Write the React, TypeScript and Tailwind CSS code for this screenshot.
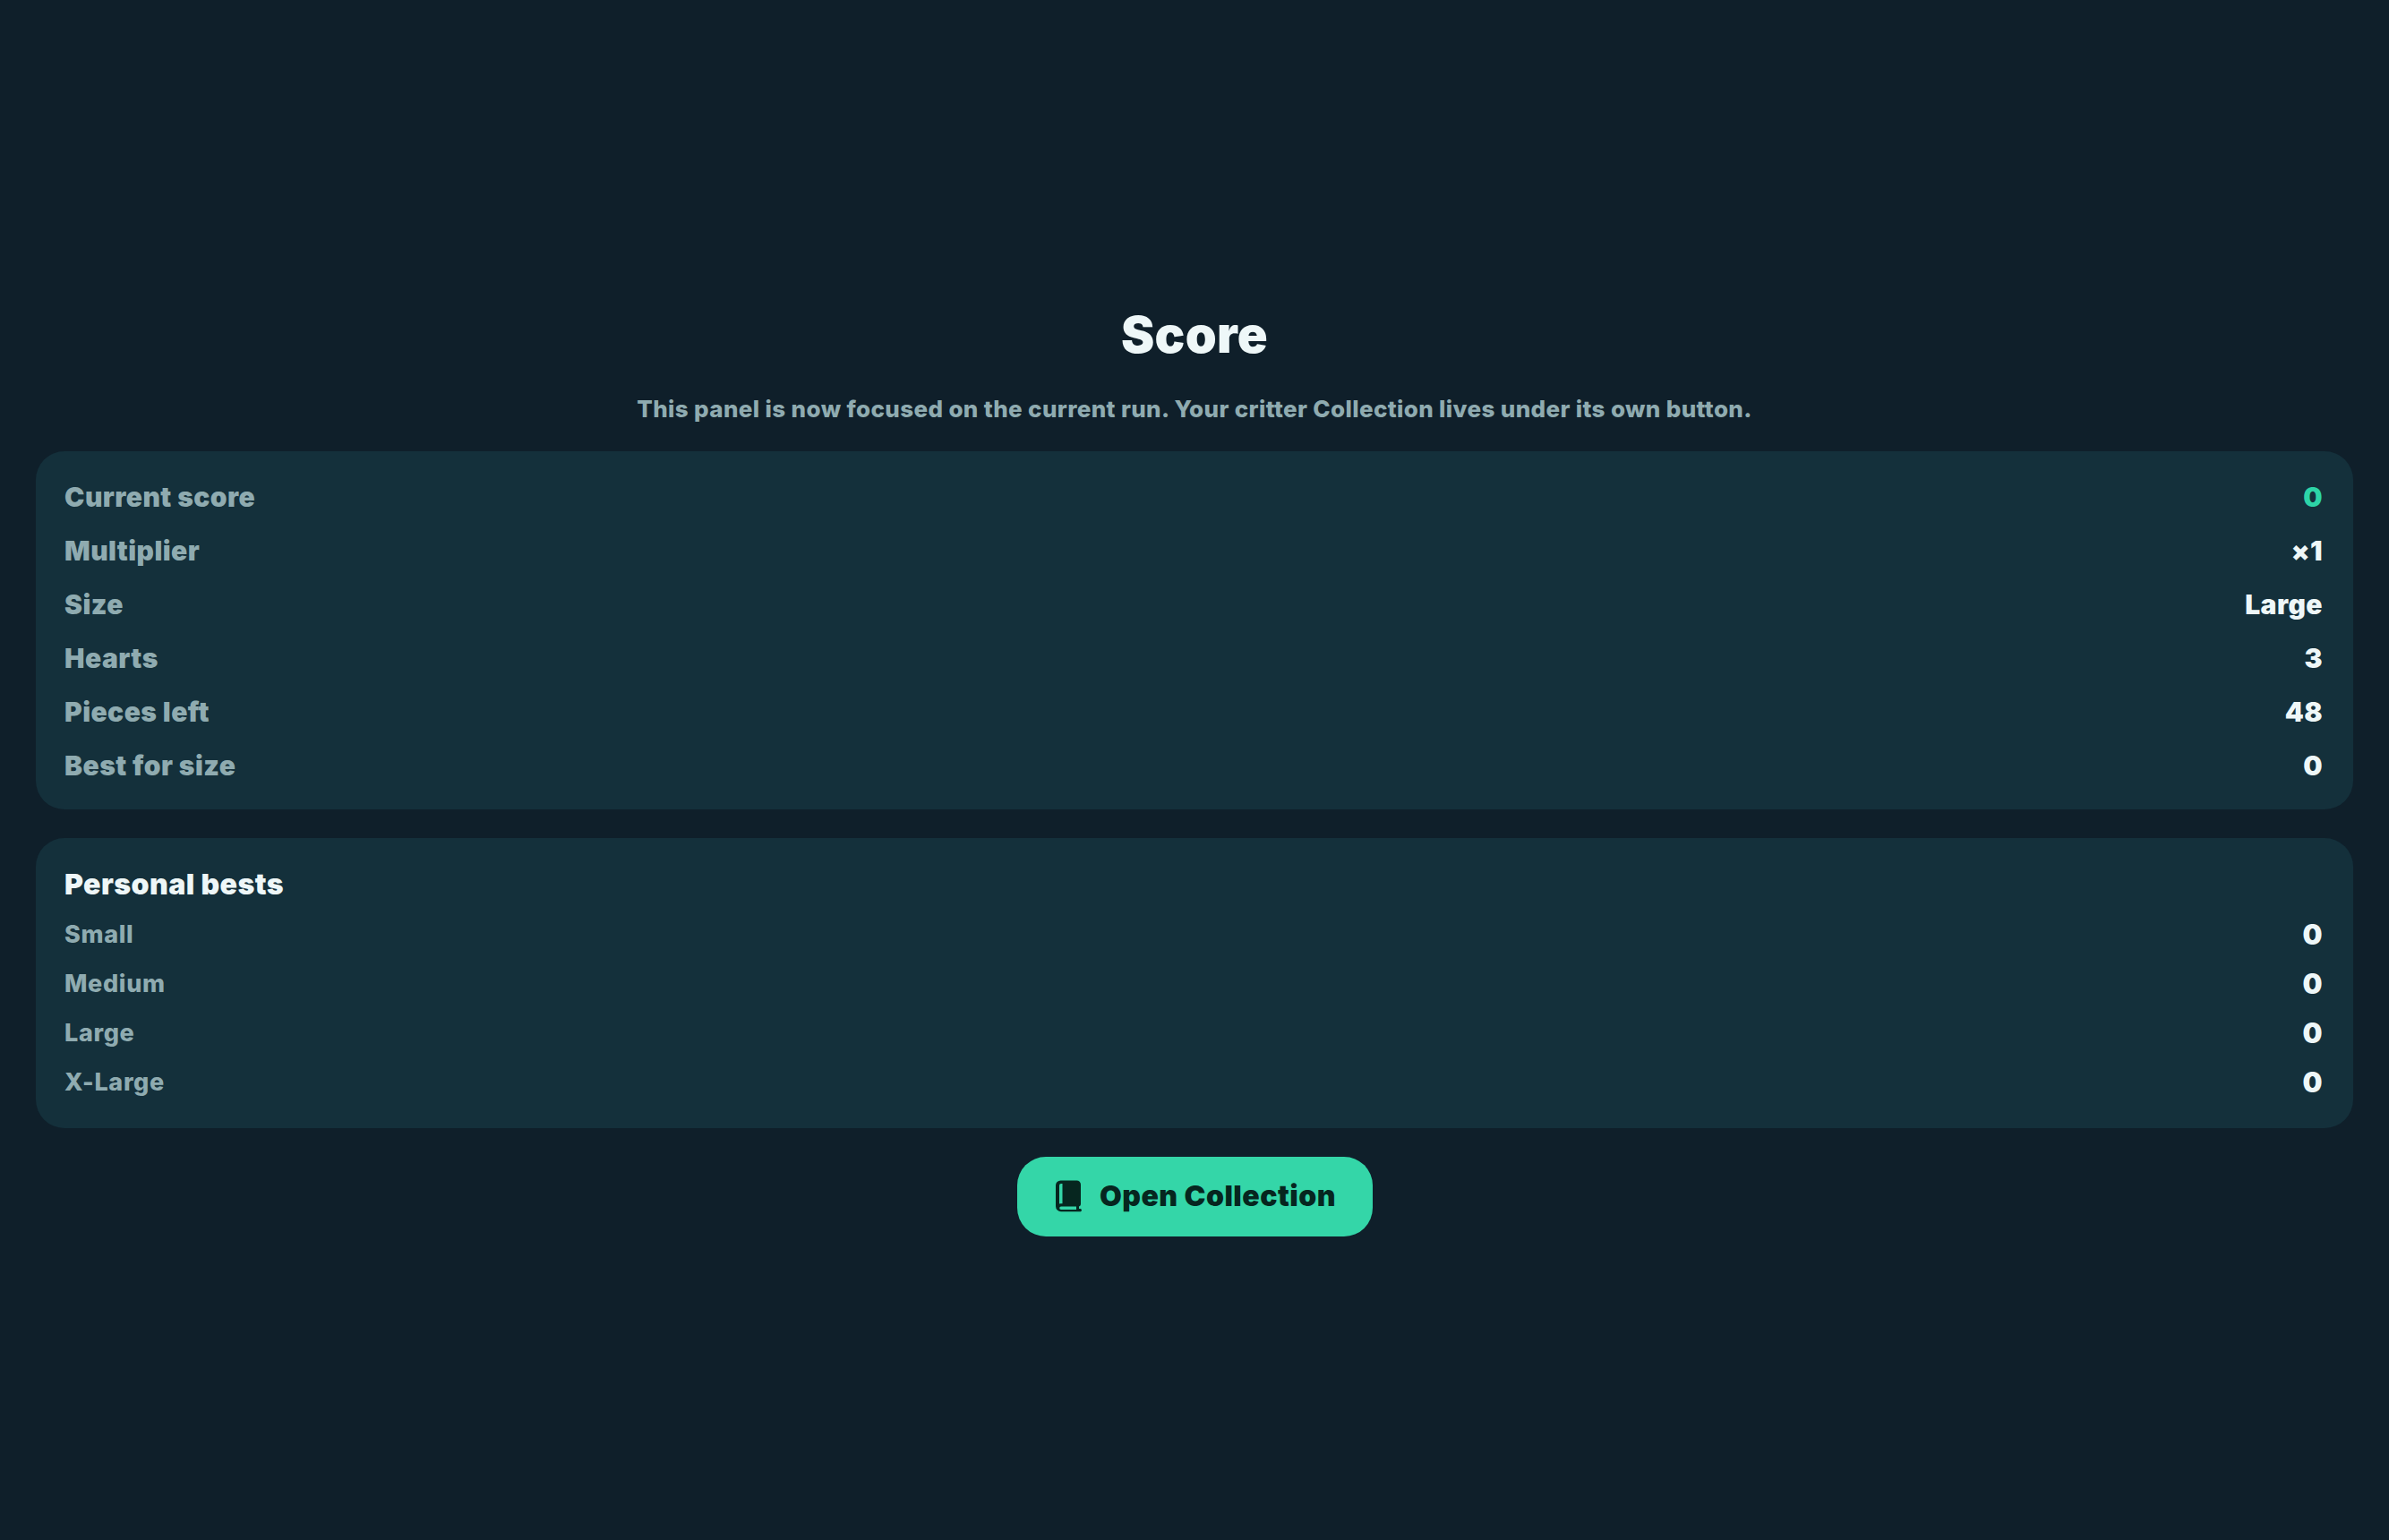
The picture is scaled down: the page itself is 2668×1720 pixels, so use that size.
const rows: [string, string, string?][] = [
  ["Current score", "0", "text-[#2dd4a7]"],
  ["Multiplier", "×1"],
  ["Size", "Large"],
  ["Hearts", "3"],
  ["Pieces left", "48"],
  ["Best for size", "0"],
];
const bests: [string, string][] = [
  ["Small", "0"],
  ["Medium", "0"],
  ["Large", "0"],
  ["X-Large", "0"],
];

function BookIcon() {
  return (
    <svg viewBox="0 0 30 36" className="h-[36px] w-[30px]" fill="#06261f">
      <path fillRule="evenodd" d="M6.500 0.500h18a4.500 4.500 0 0 1 4.500 4.500v22a2.500 2.500 0 0 1-2 2.500v2.500h1a1.700 1.700 0 0 1 1 3.200H7a6 6 0 0 1-6-6V6a5.500 5.500 0 0 1 5.500-5.500Zm0.500 3.500a2 2 0 0 0-2 2v20.500a6 6 0 0 1 2-.300l1.500 0V4Zm0 25.500a1.800 1.800 0 0 0 0 3.600h17v-3.600Z" />
    </svg>
  );
}

export default function App() {
  return (
    <div className="flex h-screen flex-col items-stretch justify-center gap-[32px] bg-[#0f1f2a] px-[40px] font-['Inter','Liberation_Sans',sans-serif]">
      <h1 className="text-center text-[56px] leading-[68px] font-black tracking-[0.3px] text-[#eef7f8]">Score</h1>
      <p className="pt-[1px] text-center text-[26px] leading-[31px] font-extrabold tracking-[0.36px] text-[#8fabb0]">
        This panel is now focused on the current run. Your critter Collection lives under its own button.
      </p>
      <section className="flex flex-col rounded-[32px] bg-[#14303b] pt-[20px] pr-[34px] pb-[20px] pl-[32px]">
        {rows.map(([k, v, c]) => (
          <div key={k} className="flex h-[60px] items-center justify-between pt-[3px] text-[30px] font-black tracking-[0.45px]">
            <span className="text-[#8fabb0]">{k}</span>
            <span className={c ?? "text-[#eef7f8]"}>{v}</span>
          </div>
        ))}
      </section>
      <section className="flex flex-col rounded-[32px] bg-[#14303b] pt-[24px] pr-[34px] pb-[25px] pl-[32px]">
        <h2 className="h-[55px] text-[32px] leading-[55px] font-black tracking-[0.45px] text-[#eef7f8]">Personal bests</h2>
        {bests.map(([k, v]) => (
          <div key={k} className="flex h-[55px] items-center justify-between pt-[4px]">
            <span className="text-[27px] font-extrabold tracking-[0.65px] text-[#8fabb0]">{k}</span>
            <span className="text-[31px] font-black tracking-[0.5px] text-[#eef7f8]">{v}</span>
          </div>
        ))}
      </section>
      <button className="flex h-[89px] w-[397px] items-center justify-center gap-[20px] self-center rounded-[32px] bg-[#34d6a8] pl-[2px] text-[32px] font-black tracking-[0.5px] text-[#06261f]">
        <BookIcon />
        Open Collection
      </button>
    </div>
  );
}
